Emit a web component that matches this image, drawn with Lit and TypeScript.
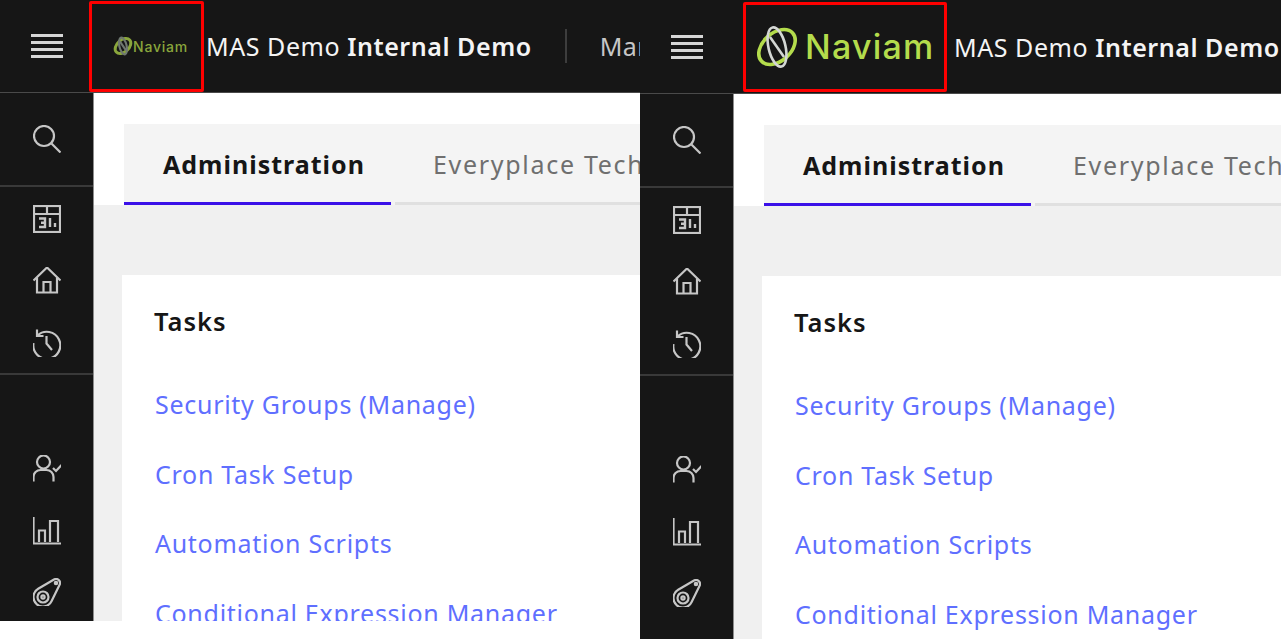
import { LitElement, html, css, svg } from "lit";
import { customElement, property } from "lit/decorators.js";

const logoMark = svg`
  <g fill="none">
    <ellipse class="g" cx="20" cy="21" rx="21" ry="14" transform="rotate(-42 20 21)" stroke="#b4dc4c" stroke-width="3.6"/>
    <ellipse class="w" cx="20" cy="21" rx="8.5" ry="20" transform="rotate(-13 20 21)" stroke="#d4d7d4" stroke-width="2.6"/>
    <path class="w" d="M13 11 L27 31" stroke="#d4d7d4" stroke-width="2.6"/>
  </g>`;

const icons = {
  search: svg`<circle cx="12" cy="12" r="10"/><path d="M19.5 19.5 L28.5 28.5"/>`,
  calendar: svg`<rect x="2" y="2" width="26" height="26"/><path d="M2 10 H28 M15 2 V10"/><path d="M7 14.5 H13 V23 H7 M9 18.7 H13" stroke-width="2.4"/><path d="M18 14 V23 M23 19 V23" stroke-width="2.4"/>`,
  home: svg`<path d="M1.5 14.5 L15 1.5 L28.5 14.5"/><path d="M5 11.5 V26.5 H25 V11.5"/><path d="M11.5 26.5 V16 H18.5 V26.5"/>`,
  history: svg`<path d="M5.5 7.5 A13.5 13.5 0 1 1 1.5 15"/><path d="M5 1.5 V8 H11.5"/><path d="M14.5 8 V15.5 L20 22"/>`,
  user: svg`<circle cx="11.5" cy="8" r="6.5"/><path d="M1.5 27.5 V23 A7 7 0 0 1 8.5 16 H14.5 A7 7 0 0 1 21.5 23 V27.5"/><path d="M21 14 L24 17 L29.5 11"/>`,
  chart: svg`<path d="M1.5 0.5 V27.5 H29"/><path d="M7 26 V14.5 H13 V26"/><path d="M18 26 V5 H26 V26"/>`,
  part: svg`<path d="M6.2 11.8 L22 2.55 A4 4 0 0 1 27.6 7.8 L19.5 24.2 A9.5 9.5 0 1 1 6.2 11.8 Z"/><circle cx="11" cy="20" r="5.5"/><circle cx="11" cy="20" r="1.6"/><circle cx="24" cy="6" r="1.2"/>`,
};

@customElement("mas-pane")
class MasPane extends LitElement {
  @property() variant = "left";

  static styles = css`
    :host { display: block; overflow: hidden; position: relative; }
    :host([variant="left"]) { height: 621px; }
    :host([variant="right"]) { height: 639px; }
    .pane { display: grid; grid-template-rows: auto 1fr; height: 100%; font-family: "Noto Sans", sans-serif; }
    header { display: flex; align-items: center; background: #161616; color: #f4f4f4; border-bottom: 1px solid #4a4a4a; white-space: nowrap; overflow: hidden; }
    .left header { height: 92px; }
    .right header { height: 93px; }
    .burger { flex: none; width: 89px; display: flex; flex-direction: column; gap: 4px; padding-left: 31px; box-sizing: border-box; }
    .right .burger { width: 103px; }
    .burger i { display: block; width: 32px; height: 3px; background: #d6d6d6; }
    .logo { flex: none; box-sizing: border-box; display: flex; align-items: center; border: 3px solid #f00; border-radius: 2px; }
    .left .logo { width: 115px; height: 91px; padding-left: 22px; gap: 1px; margin-right: 2px; }
    .right .logo { width: 204px; height: 90px; padding-left: 11px; gap: 8px; margin-right: 7px; }
    .logo svg { flex: none; overflow: visible; }
    .left .logo svg { width: 18px; height: 18px; }
    .left .logo .g { stroke-width: 7; stroke: #8aa63c; }
    .left .logo .w { stroke-width: 5; stroke: #6f7870; }
    .right .logo svg { width: 40px; height: 42px; }
    .mark { font-family: "Inter", sans-serif; }
    .left .mark { font-size: 14px; font-weight: 500; color: #8aa63c; letter-spacing: 0.8px; }
    .right .mark { font-size: 34px; font-weight: 500; color: #b4dc4c; letter-spacing: 1.2px; }
    .title { font-size: 25px; letter-spacing: 0.55px; }
    .title b { font-weight: 600; }
    .sep { flex: none; width: 2px; height: 34px; background: #3d3d3d; margin: 0 33px; }
    .app { font-size: 25px; color: #c6c6c6; letter-spacing: 0.5px; }
    .body { display: grid; grid-template-columns: 94px 1fr; min-height: 0; }
    nav { background: #161616; border-right: 1px solid #8d8d8d; box-sizing: border-box; display: flex; flex-direction: column; overflow: hidden; }
    nav section { display: flex; flex-direction: column; align-items: center; gap: 34px; box-sizing: border-box; border-bottom: 2px solid #393939; padding-left: 1px; }
    nav .s1 { height: 94px; padding-top: 32px; }
    nav .s2 { height: 188px; padding-top: 18px; }
    nav .s3 { border-bottom: 0; padding-top: 80px; gap: 33.5px; }
    nav svg { flex: none; width: 28px; height: 28px; fill: none; stroke: #c6c6c6; stroke-width: 2.2; }
    main { background: #f0f0f0; min-width: 0; overflow: hidden; }
    .tabs-wrap { background: #fff; padding: 31px 0 0 30px; }
    .tabs { display: flex; gap: 4px; height: 81px; background: #f4f4f4; box-sizing: border-box; white-space: nowrap; overflow: hidden; }
    .tab { flex: none; box-sizing: border-box; border-bottom: 3px solid #e0e0e0; padding: 23px 38px 0; font-size: 25px; color: #6f6f6f; }
    .tab.on { width: 267px; padding-left: 39px; padding-right: 0; border-bottom-color: #3a10e8; color: #161616; font-weight: 700; letter-spacing: 1px; }
    .tab.rest { flex: 1; letter-spacing: 1.7px; }
    .card { background: #fff; margin: 70px 0 0 28px; padding: 27px 32px 0; height: 400px; }
    h2 { margin: 0 0 45px; font-size: 25.5px; font-weight: 600; color: #161616; line-height: 38px; letter-spacing: 1px; }
    ul { list-style: none; margin: 0 0 0 1px; padding: 0; display: flex; flex-direction: column; gap: 31px; white-space: nowrap; }
    li { font-size: 25px; line-height: 38.5px; color: #5f6fff; letter-spacing: 0.72px; }
  `;

  render() {
    return html`
      <div class="pane ${this.variant}">
        <header>
          <div class="burger"><i></i><i></i><i></i><i></i></div>
          <div class="logo">
            <svg viewBox="0 0 40 42">${logoMark}</svg>
            <span class="mark">Naviam</span>
          </div>
          <span class="title">MAS Demo <b>Internal Demo</b></span>
          <span class="sep"></span>
          <span class="app">Manage</span>
        </header>
        <div class="body">
          <nav>
            <section class="s1"><svg viewBox="1 1 28 28">${icons.search}</svg></section>
            <section class="s2">
              <svg viewBox="1 1 28 28">${icons.calendar}</svg>
              <svg viewBox="1 1 28 28">${icons.home}</svg>
              <svg viewBox="1 1 28 28">${icons.history}</svg>
            </section>
            <section class="s3">
              <svg viewBox="1 1 28 28">${icons.user}</svg>
              <svg viewBox="1 1 28 28">${icons.chart}</svg>
              <svg viewBox="1 1 28 28">${icons.part}</svg>
            </section>
          </nav>
          <main>
            <div class="tabs-wrap">
              <div class="tabs">
                <div class="tab on">Administration</div>
                <div class="tab rest">Everyplace Technician</div>
              </div>
            </div>
            <div class="card">
              <h2>Tasks</h2>
              <ul>
                <li>Security Groups (Manage)</li>
                <li>Cron Task Setup</li>
                <li>Automation Scripts</li>
                <li>Conditional Expression Manager</li>
              </ul>
            </div>
          </main>
        </div>
      </div>
    `;
  }
}

@customElement("app-root")
class AppRoot extends LitElement {
  static styles = css`
    :host { display: grid; grid-template-columns: 640px 641px; align-items: start; width: 1281px; height: 639px; background: #fff; overflow: hidden; }
  `;

  render() {
    return html`
      <mas-pane variant="left"></mas-pane>
      <mas-pane variant="right"></mas-pane>
    `;
  }
}
